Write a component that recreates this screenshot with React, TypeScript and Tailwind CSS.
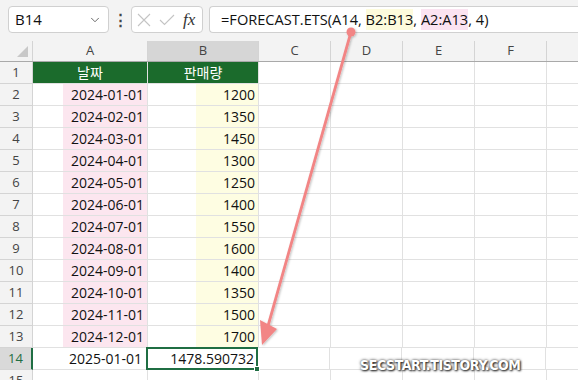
import { ChevronDown } from "lucide-react"

const dates = [
  "2024-01-01", "2024-02-01", "2024-03-01", "2024-04-01", "2024-05-01", "2024-06-01",
  "2024-07-01", "2024-08-01", "2024-09-01", "2024-10-01", "2024-11-01", "2024-12-01",
]
const sales = [1200, 1350, 1450, 1300, 1250, 1400, 1550, 1600, 1400, 1350, 1500, 1700]

const cols = ["A", "B", "C", "D", "E", "F", ""]
const colW = ["w-[115px]", "w-[111px]", "w-[72px]", "w-[72px]", "w-[72px]", "w-[72px]", "flex-1"]

function RowHead({ n, active }: { n: number; active?: boolean }) {
  return (
    <div
      className={
        active
          ? "w-[33px] shrink-0 flex items-center justify-center border-b border-r-2 border-b-[#d4d4d4] border-r-[#1f6e43] bg-[#d9d9d9] text-[13px] text-[#1f6e43]"
          : "w-[33px] shrink-0 flex items-center justify-center border-b border-r border-[#d4d4d4] bg-[#f3f3f3] text-[13px] text-[#444]"
      }
    >
      {n}
    </div>
  )
}

function Blank() {
  return (
    <>
      <div className="w-[72px] shrink-0 border-b border-r border-[#e1e1e1]" />
      <div className="w-[72px] shrink-0 border-b border-r border-[#e1e1e1]" />
      <div className="w-[72px] shrink-0 border-b border-r border-[#e1e1e1]" />
      <div className="w-[72px] shrink-0 border-b border-r border-[#e1e1e1]" />
      <div className="flex-1 border-b border-[#e1e1e1]" />
    </>
  )
}

export default function App() {
  return (
    <div className="relative w-[578px] h-[380px] overflow-hidden bg-white font-['Segoe_UI','Open_Sans','Noto_Sans_CJK_KR',sans-serif] text-[#111]">
      {/* formula bar */}
      <div className="flex h-[41px] items-start bg-[#f3f3f3] pt-[6px] pl-[8px]">
        <div className="flex h-[27px] w-[101px] items-center justify-between rounded-[4px] border border-[#d0d0d0] bg-white pl-[6px] pr-[6px] text-[15px]">
          <span>B14</span>
          <ChevronDown className="h-[14px] w-[14px] text-[#555]" strokeWidth={1.5} />
        </div>
        <div className="flex h-[27px] w-[22px] items-center justify-center text-[15px] font-bold text-[#444]">⋮</div>
        <div className="flex h-[27px] w-[72px] items-center rounded-[4px] border border-[#d0d0d0] bg-white pl-[5px]">
          <svg width="14" height="14" viewBox="0 0 14 14" className="text-[#c4c4c4]">
            <path d="M1 1 L13 13 M13 1 L1 13" stroke="currentColor" strokeWidth="1.1" fill="none" />
          </svg>
          <svg width="16" height="12" viewBox="0 0 16 12" className="ml-[8px] text-[#c4c4c4]">
            <path d="M1 6 L5.5 10.5 L15 1" stroke="currentColor" strokeWidth="1.1" fill="none" />
          </svg>
          <span className="ml-[8px] font-['Liberation_Serif',serif] text-[17px] italic text-[#333]">fx</span>
        </div>
        <div className="ml-[6px] flex h-[27px] flex-1 items-center rounded-l-[4px] border border-r-0 border-[#d0d0d0] bg-white pl-[11px] text-[14.6px] whitespace-pre">
          <span>=FORECAST.ETS(A14, </span>
          <span className="bg-[#fdfbdc]">B2:B13</span>
          <span>, </span>
          <span className="bg-[#fbe3f1]">A2:A13</span>
          <span>, 4)</span>
        </div>
      </div>

      {/* column headers */}
      <div className="flex h-[21px] border-b border-[#a9a9a9] bg-[#f3f3f3] text-[13px] text-[#444]">
        <div className="relative w-[33px] shrink-0 border-r border-[#d4d4d4]">
          <div className="absolute bottom-[4px] right-[4px] h-0 w-0 border-b-[11px] border-l-[11px] border-b-[#c8c8c8] border-l-transparent" />
        </div>
        {cols.map((c, i) => (
          <div
            key={i}
            className={`${colW[i]} ${i < 6 ? "shrink-0 border-r" : ""} flex items-center justify-center border-[#d4d4d4] ${c === "B" ? "bg-[#d6d6d6]" : ""}`}
          >
            {c}
          </div>
        ))}
      </div>

      {/* row 1 */}
      <div className="flex h-[22px]">
        <RowHead n={1} />
        <div className="w-[115px] shrink-0 flex items-center justify-center border-b border-r border-[#e1e1e1] bg-[#1b6b2c] text-[14px] text-white font-['Noto_Sans_CJK_KR',sans-serif]">
          날짜
        </div>
        <div className="w-[111px] shrink-0 flex items-center justify-center border-b border-r border-[#e1e1e1] bg-[#1b6b2c] text-[14px] text-white font-['Noto_Sans_CJK_KR',sans-serif]">
          판매량
        </div>
        <Blank />
      </div>

      {dates.map((d, i) => (
        <div key={d} className="flex h-[22px] text-[14px]">
          <RowHead n={i + 2} />
          <div className="w-[115px] shrink-0 flex justify-end border-b border-r border-[#e1e1e1]">
            <div className="flex w-[84px] items-center justify-end bg-[#fce6ef] pr-[3px]">{d}</div>
          </div>
          <div className="w-[111px] shrink-0 flex justify-end border-b border-r border-[#e1e1e1]">
            <div className="flex w-[62px] items-center justify-end bg-[#fefde2] pr-[3px]">{sales[i]}</div>
          </div>
          <Blank />
        </div>
      ))}

      {/* row 14 */}
      <div className="flex h-[22px] text-[14px]">
        <RowHead n={14} active />
        <div className="w-[114px] shrink-0 flex items-center justify-end border-b border-r border-[#e1e1e1] pr-[4px]">2025-01-01</div>
        <div className="relative w-[111px] shrink-0 flex items-center justify-end border-b border-r border-[#e1e1e1] pr-[3px]">
          1478.590732
          <div className="absolute -left-[1px] -top-[1px] -right-[1px] -bottom-[1px] border-2 border-[#1f6e43]" />
          <div className="absolute -bottom-[3px] -right-[3px] h-[6px] w-[6px] border border-white bg-[#1f6e43]" />
        </div>
        <Blank />
      </div>

      {/* row 15 */}
      <div className="flex h-[22px]">
        <RowHead n={15} />
        <div className="w-[115px] shrink-0 border-b border-r border-[#e1e1e1]" />
        <div className="w-[111px] shrink-0 border-b border-r border-[#e1e1e1]" />
        <Blank />
      </div>

      {/* annotation arrow */}
      <svg className="pointer-events-none absolute left-0 top-0" width="578" height="380">
        <defs>
          <filter id="sh" x="-20%" y="-20%" width="140%" height="140%">
            <feDropShadow dx="1" dy="1" stdDeviation="1" floodColor="#000" floodOpacity="0.25" />
          </filter>
        </defs>
        <g filter="url(#sh)">
          <line x1="351" y1="32" x2="268" y2="326" stroke="#f28585" strokeWidth="2.8" strokeLinecap="round" />
          <circle cx="351" cy="32" r="4.5" fill="#f28585" />
          <polygon points="262,345 260,320 277,329" fill="#f28585" />
        </g>
      </svg>

      <div className="absolute left-[360px] top-[355px] font-['DejaVu_Sans_Condensed','DejaVu_Sans',sans-serif] text-[14px] font-bold tracking-[-0.4px] text-white [text-shadow:0_0_3px_#333,1px_1px_2px_#222]">
        SECSTART.TISTORY.COM
      </div>
    </div>
  )
}
